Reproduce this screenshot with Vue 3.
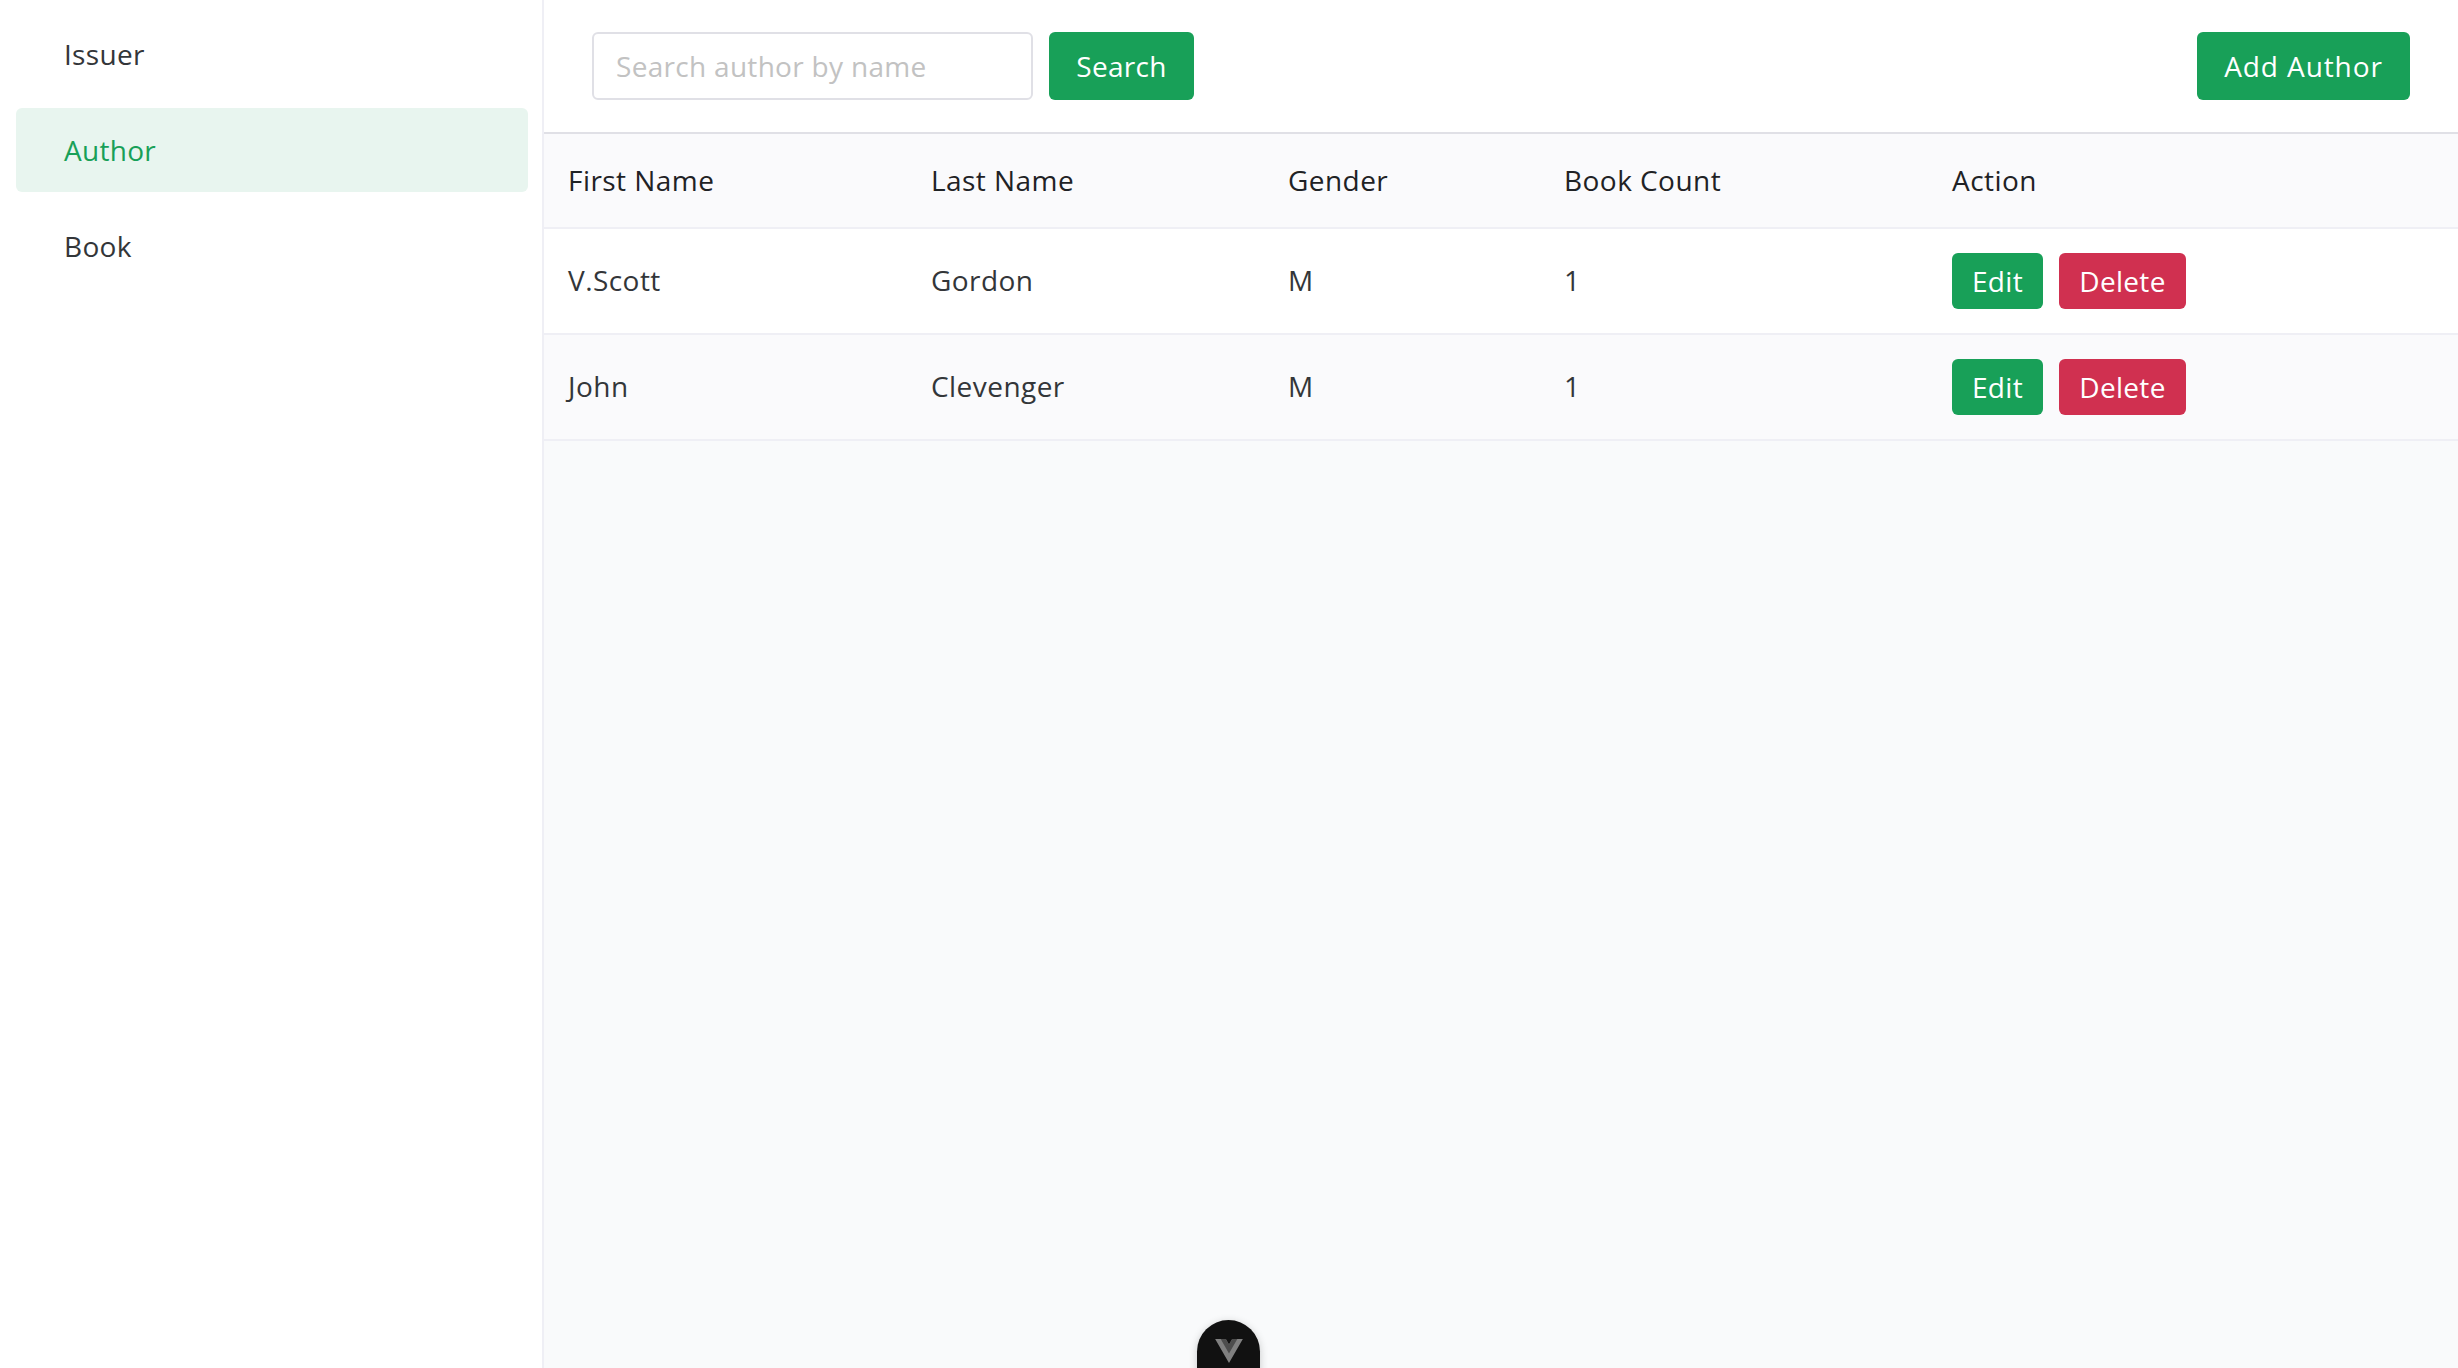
<script setup>
const authors = [
  { first: 'V.Scott', last: 'Gordon', gender: 'M', count: 1 },
  { first: 'John', last: 'Clevenger', gender: 'M', count: 1 }
]
const menu = [
  { label: 'Issuer', active: false },
  { label: 'Author', active: true },
  { label: 'Book', active: false }
]
</script>

<template>
  <div class="layout">
    <aside class="sidebar">
      <div v-for="item in menu" :key="item.label" class="menu-item" :class="{ active: item.active }">{{ item.label }}</div>
    </aside>
    <main class="main">
      <header class="toolbar">
        <div class="search">
          <input class="input" placeholder="Search author by name" />
          <button class="btn search-btn">Search</button>
        </div>
        <button class="btn add-btn">Add Author</button>
      </header>
      <div class="row head">
        <div class="cell">First Name</div>
        <div class="cell">Last Name</div>
        <div class="cell">Gender</div>
        <div class="cell">Book Count</div>
        <div class="cell">Action</div>
      </div>
      <div v-for="(a, i) in authors" :key="a.first" class="row body" :class="{ odd: i === 0 }">
        <div class="cell">{{ a.first }}</div>
        <div class="cell">{{ a.last }}</div>
        <div class="cell">{{ a.gender }}</div>
        <div class="cell">{{ a.count }}</div>
        <div class="actions">
          <button class="btn small edit">Edit</button>
          <button class="btn small delete">Delete</button>
        </div>
      </div>
    </main>
    <div class="devtools">
      <svg width="28" height="24" viewBox="0 0 261.76 226.69">
        <path d="M161.096.001l-30.225 52.351L100.647.001H-.005l130.877 226.688L261.749.001z" fill="#808080" />
        <path d="M161.096.001l-30.225 52.351L100.647.001H52.346l78.526 136.01L209.398.001z" fill="#4d4d4d" />
      </svg>
    </div>
  </div>
</template>

<style>
html, body { margin: 0; background: #fff; }
</style>

<style scoped>
.layout {
  display: flex;
  height: 1368px;
  overflow: hidden;
  position: relative;
  font-family: "Open Sans", sans-serif;
  font-size: 28px;
  letter-spacing: 0.3px;
  color: #333639;
}
.sidebar {
  width: 544px;
  box-sizing: border-box;
  flex: none;
  border-right: 2px solid #efeff5;
  padding: 12px 14px 0 16px;
  display: flex;
  flex-direction: column;
  gap: 12px;
  height: 100%;
}
.menu-item {
  height: 84px;
  line-height: 84px;
  padding-left: 48px;
  border-radius: 6px;
  color: #333639;
}
.menu-item.active {
  background: #e8f5ef;
  color: #18a058;
}
.main {
  flex: 1;
  background: #f9fafb;
  min-width: 0;
}
.toolbar {
  height: 132px;
  background: #fff;
  border-bottom: 2px solid #e0e0e6;
  display: flex;
  justify-content: space-between;
  align-items: center;
  padding: 0 48px;
}
.search {
  display: flex;
  gap: 16px;
}
.input {
  width: 441px;
  height: 68px;
  box-sizing: border-box;
  border: 2px solid #e0e0e6;
  border-radius: 6px;
  padding: 0 22px;
  font: inherit;
  letter-spacing: inherit;
  outline: none;
  background: #fff;
}
.input::placeholder { color: #c2c2c2; opacity: 1; }
.btn {
  border: none;
  border-radius: 6px;
  font: inherit;
  letter-spacing: inherit;
  color: #fff;
  background: #18a058;
  padding: 0;
  height: 68px;
}
.search-btn { width: 145px; }
.add-btn { width: 213px; letter-spacing: 0.9px; }
.small { height: 56px; }
.edit { width: 91px; }
.delete { width: 127px; background: #d03050; }
.row {
  display: grid;
  grid-template-columns: 363px 357px 276px 388px 1fr;
  padding-left: 24px;
  align-items: center;
  background: #fafafc;
  border-bottom: 2px solid #efeff5;
}
.cell {
  letter-spacing: 0.45px;
  padding-bottom: 2px;
}
.head { height: 93px; color: #1f2225; }
.body { height: 104px; }
.body.odd { background: #fff; }
.actions { display: flex; gap: 16px; }
.devtools {
  position: absolute;
  left: 1197px;
  top: 1320px;
  width: 63px;
  height: 60px;
  background: #111;
  border-radius: 32px 32px 0 0;
  box-shadow: 0 2px 8px rgba(0,0,0,.2);
  display: flex;
  justify-content: center;
  padding-top: 19px;
  box-sizing: border-box;
}
</style>
